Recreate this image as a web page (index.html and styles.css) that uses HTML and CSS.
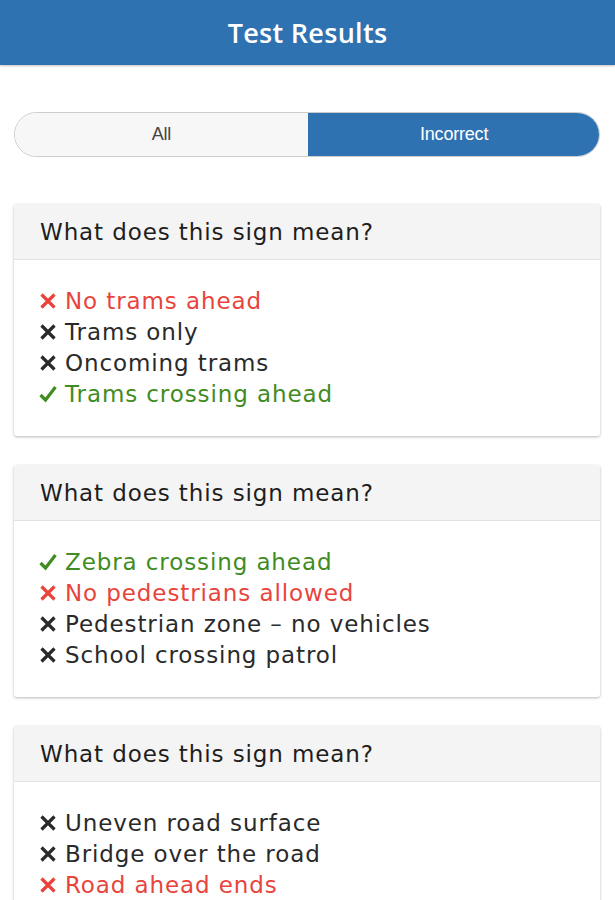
FILE: index.html
```html
<!DOCTYPE html>
<html>
<head>
<meta charset="utf-8">
<link rel="stylesheet" href="styles.css">
</head>
<body>
<header class="topbar"><h1 class="title">Test Results</h1></header>
<main class="content">
  <div class="segment">
    <div class="seg seg-off">All</div>
    <div class="seg seg-on">Incorrect</div>
  </div>

  <section class="card">
    <div class="card-head">What does this sign mean?</div>
    <ul class="answers">
      <li class="ans wrong"><svg class="mark" viewBox="0 0 18 18"><path d="M2.5 2.5L15.5 15.5M15.5 2.5L2.5 15.5"/></svg>No trams ahead</li>
      <li class="ans"><svg class="mark" viewBox="0 0 18 18"><path d="M2.5 2.5L15.5 15.5M15.5 2.5L2.5 15.5"/></svg>Trams only</li>
      <li class="ans"><svg class="mark" viewBox="0 0 18 18"><path d="M2.5 2.5L15.5 15.5M15.5 2.5L2.5 15.5"/></svg>Oncoming trams</li>
      <li class="ans right"><svg class="mark" viewBox="0 0 18 18"><path d="M1.5 10L6.5 15L16.5 2"/></svg>Trams crossing ahead</li>
    </ul>
  </section>

  <section class="card">
    <div class="card-head">What does this sign mean?</div>
    <ul class="answers">
      <li class="ans right"><svg class="mark" viewBox="0 0 18 18"><path d="M1.5 10L6.5 15L16.5 2"/></svg>Zebra crossing ahead</li>
      <li class="ans wrong"><svg class="mark" viewBox="0 0 18 18"><path d="M2.5 2.5L15.5 15.5M15.5 2.5L2.5 15.5"/></svg>No pedestrians allowed</li>
      <li class="ans"><svg class="mark" viewBox="0 0 18 18"><path d="M2.5 2.5L15.5 15.5M15.5 2.5L2.5 15.5"/></svg>Pedestrian zone – no vehicles</li>
      <li class="ans"><svg class="mark" viewBox="0 0 18 18"><path d="M2.5 2.5L15.5 15.5M15.5 2.5L2.5 15.5"/></svg>School crossing patrol</li>
    </ul>
  </section>

  <section class="card">
    <div class="card-head">What does this sign mean?</div>
    <ul class="answers">
      <li class="ans"><svg class="mark" viewBox="0 0 18 18"><path d="M2.5 2.5L15.5 15.5M15.5 2.5L2.5 15.5"/></svg>Uneven road surface</li>
      <li class="ans"><svg class="mark" viewBox="0 0 18 18"><path d="M2.5 2.5L15.5 15.5M15.5 2.5L2.5 15.5"/></svg>Bridge over the road</li>
      <li class="ans wrong"><svg class="mark" viewBox="0 0 18 18"><path d="M2.5 2.5L15.5 15.5M15.5 2.5L2.5 15.5"/></svg>Road ahead ends</li>
    </ul>
  </section>
</main>
</body>
</html>
```
FILE: styles.css
```css
html, body {
  margin: 0;
  padding: 0;
  background: #ffffff;
}
body {
  font-family: "DejaVu Sans", "Open Sans", sans-serif;
  color: #222222;
  overflow: hidden;
}
.topbar {
  height: 65px;
  background: #2f72b2;
  display: flex;
  align-items: center;
  justify-content: center;
  box-shadow: 0 1px 2px rgba(0,0,0,0.25);
}
.title {
  margin: 0;
  color: #ffffff;
  font-family: "Open Sans", sans-serif;
  font-weight: 600;
  font-size: 27px;
  letter-spacing: 0.3px;
}
.content {
  padding: 47px 15px 0 14px;
  display: flex;
  flex-direction: column;
}
.segment {
  display: flex;
  height: 45px;
  border-radius: 23px;
  overflow: hidden;
  box-sizing: border-box;
  border: 1.5px solid #cccccc;
  margin-bottom: 47px;
}
.seg {
  flex: 1;
  display: flex;
  align-items: center;
  justify-content: center;
  font-family: "Liberation Sans", Arial, sans-serif;
  font-size: 18px;
  letter-spacing: -0.2px;
}
.seg-off {
  background: #f7f7f7;
  color: #444444;
}
.seg-on {
  background: #2f72b2;
  color: #ffffff;
  margin: -1.5px -1.5px -1.5px 0;
}
.card {
  background: #ffffff;
  border-radius: 3px;
  box-shadow: 0 1px 3px rgba(0,0,0,0.28);
  margin-bottom: 29px;
}
.card-head {
  height: 56px;
  box-sizing: border-box;
  background: #f4f4f4;
  border-bottom: 1px solid #e2e2e2;
  border-radius: 3px 3px 0 0;
  display: flex;
  align-items: center;
  padding-left: 26px;
  font-size: 23px;
  letter-spacing: 0.9px;
  color: #1e1e1e;
}
.answers {
  list-style: none;
  margin: 0;
  padding: 25px 25px 27px 25px;
}
.ans {
  display: flex;
  align-items: center;
  height: 31px;
  font-size: 23px;
  letter-spacing: 0.9px;
  color: #2a2a2a;
}
.mark {
  width: 18px;
  height: 18px;
  margin-right: 8px;
  flex: none;
  fill: none;
  stroke: #2a2a2a;
  stroke-width: 3.2;
  stroke-linecap: butt;
}
.wrong { color: #e8443c; }
.wrong .mark { stroke: #e8443c; }
.right { color: #3f8c22; }
.right .mark { stroke: #3f8c22; }
```
